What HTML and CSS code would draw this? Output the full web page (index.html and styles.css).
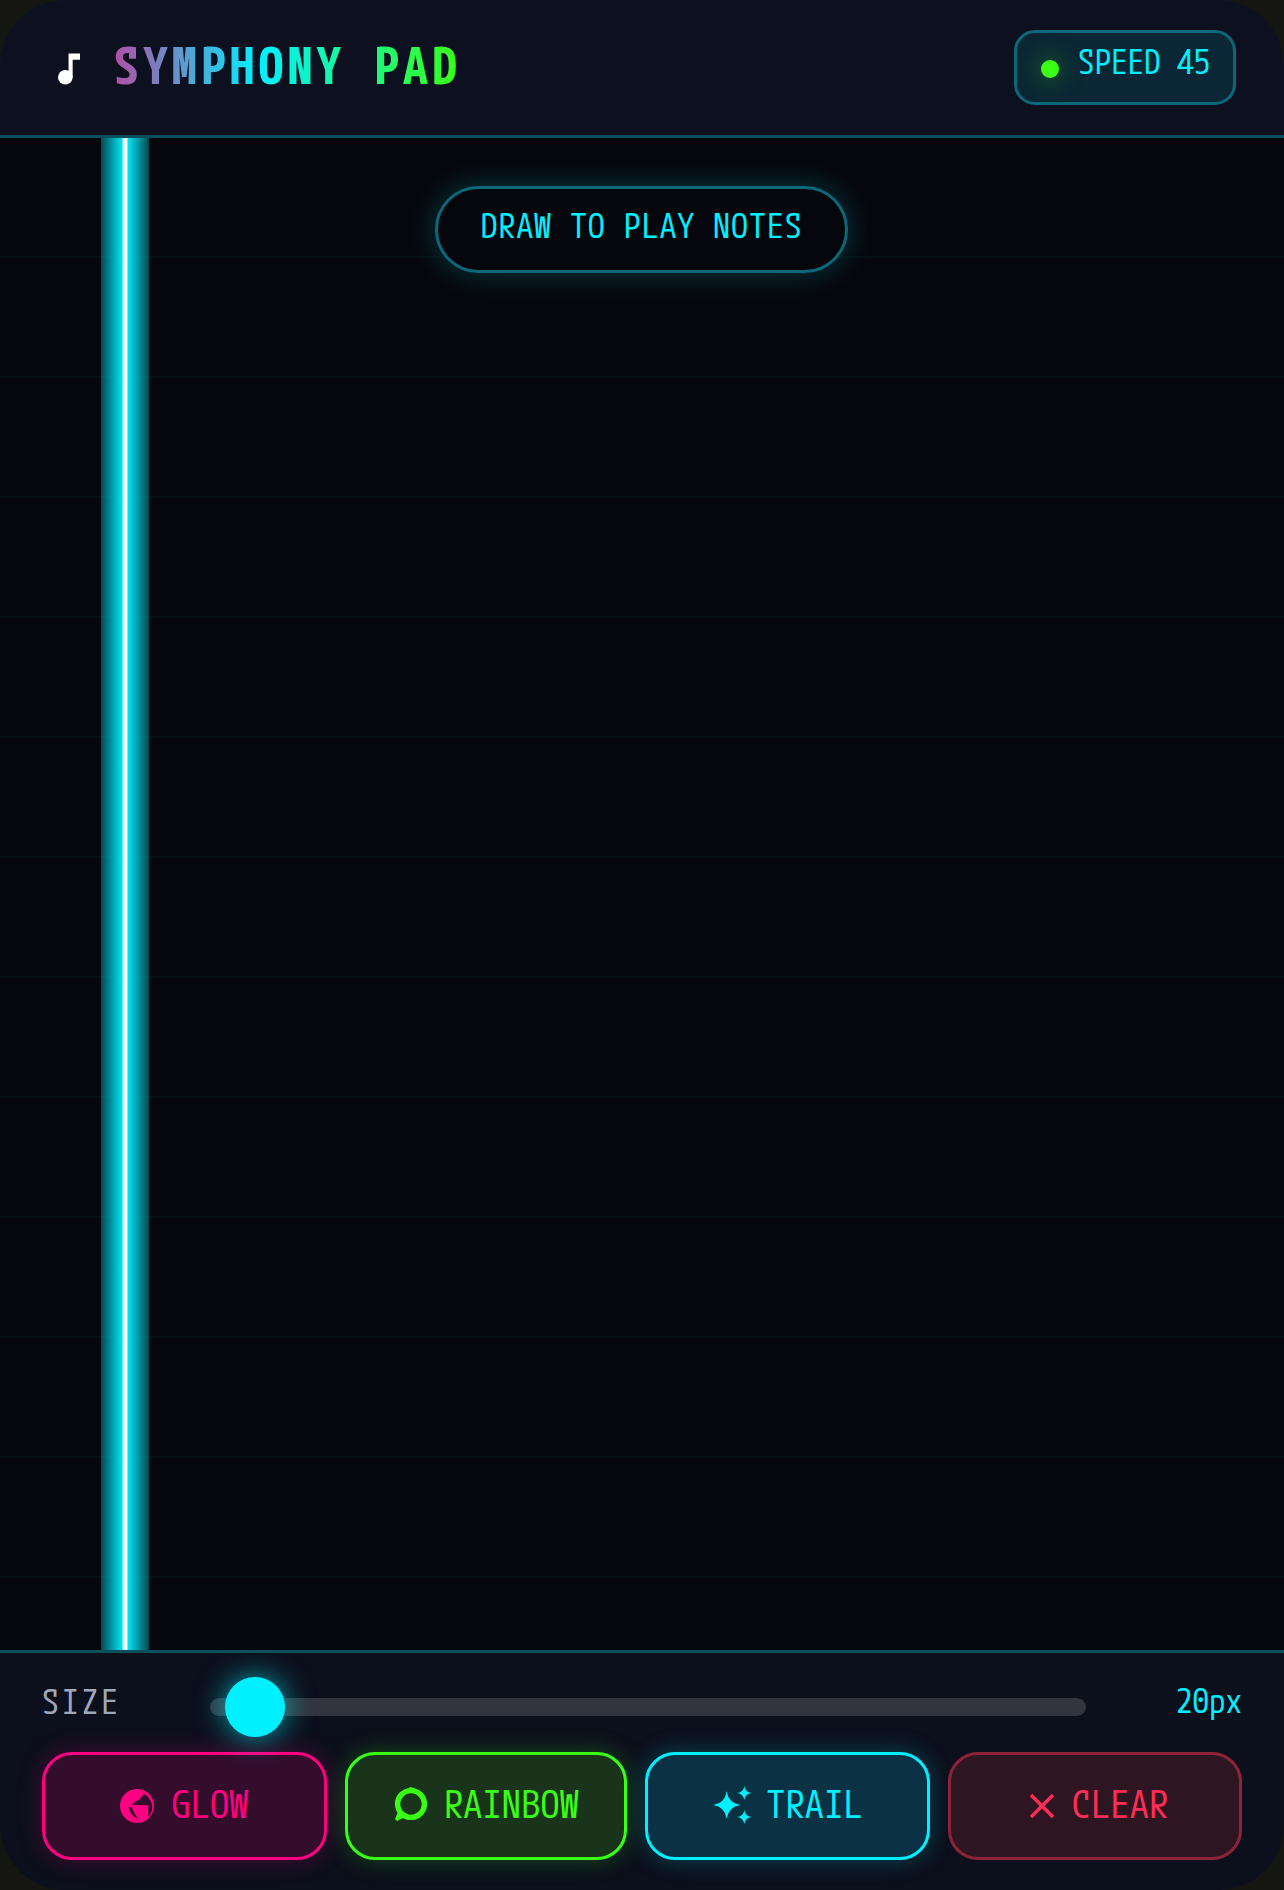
FILE: index.html
```html
<!DOCTYPE html>
<html lang="en">
<head>
<meta charset="utf-8">
<title>Symphony Pad</title>
<link rel="stylesheet" href="styles.css">
</head>
<body>
<main class="phone">
  <header class="topbar">
    <div class="brand">
      <svg class="note" viewBox="0 0 24 34" aria-hidden="true"><circle cx="8" cy="26" r="8"/><path d="M11.5 0H24V7H16V26H11.5Z"/></svg>
      <h1 class="title">SYMPHONY PAD</h1>
    </div>
    <div class="speed"><span class="dot"></span><span class="speed-text">SPEED 45</span></div>
  </header>
  <section class="canvas">
    <div class="playhead"></div>
    <div class="hint">DRAW TO PLAY NOTES</div>
  </section>
  <footer class="controls">
    <div class="size-row">
      <span class="size-label">SIZE</span>
      <div class="track"><span class="thumb"></span></div>
      <span class="size-value">20px</span>
    </div>
    <div class="buttons">
      <button class="btn btn-glow">
        <svg class="icon icon-globe" viewBox="25 28 100 100" aria-hidden="true"><circle cx="75" cy="78" r="50" fill="#ff0080"/><path class="cut" d="M95 42C108 48 118 62 120 80C120 92 116 102 108 110L108 76L60 74C66 66 80 62 85 56Z"/><path class="cut" d="M50 82L60 82C64 95 70 105 80 118C65 112 54 98 50 82Z"/></svg>
        <span>GLOW</span>
      </button>
      <button class="btn btn-rainbow">
        <svg class="icon icon-ring" viewBox="0 0 34 38" aria-hidden="true"><circle cx="18" cy="19" r="13.4" fill="none" stroke="#39ff14" stroke-width="5.4"/><path fill="#39ff14" d="M5 27L2 34L4 36L12 32ZM16 2L22 3L19 7Z"/></svg>
        <span>RAINBOW</span>
      </button>
      <button class="btn btn-trail">
        <svg class="icon icon-spark" viewBox="0 0 40 40" aria-hidden="true"><path d="M14.7 5.3Q16.5 17.2 28.2 19Q16.5 20.8 14.7 32.7Q12.9 20.8 1.2 19Q12.9 17.2 14.7 5.3Z"/><path d="M32.3 0Q33.2 6.1 39.3 7Q33.2 7.900 32.3 14Q31.4 7.900 25.300 7Q31.4 6.100 32.3 0Z"/><path d="M32.3 24Q33.2 30.100 39.3 31Q33.2 31.900 32.3 38Q31.4 31.900 25.300 31Q31.4 30.100 32.3 24Z"/></svg>
        <span>TRAIL</span>
      </button>
      <button class="btn btn-clear">
        <svg class="icon icon-x" viewBox="0 0 26 26" aria-hidden="true"><path d="M2 2L24 24M24 2L2 24" fill="none" stroke="#ff2d55" stroke-width="3.400"/></svg>
        <span>CLEAR</span>
      </button>
    </div>
  </footer>
</main>
</body>
</html>
```

FILE: styles.css
```css
* { box-sizing: border-box; }
html, body { margin: 0; height: 100%; }
body {
  background: #151512;
  font-family: "M PLUS 1 Code", "Noto Sans Mono CJK SC", monospace;
  color: #00f0ff;
}
.phone {
  width: 1284px;
  height: 1890px;
  border-radius: 66px;
  box-shadow: inset 0 0 0 3px #222220;
  overflow: hidden;
  display: flex;
  flex-direction: column;
  background: #0d111f;
  position: relative;
}
.topbar {
  height: 138px;
  flex: none;
  display: flex;
  align-items: center;
  justify-content: space-between;
  padding: 0 48px 0 58px;
  background: #0d111f;
  border-bottom: 3px solid #0b4e5c;
}
.brand { display: flex; align-items: center; gap: 34px; }
.note { width: 22px; height: 32px; fill: #fff; margin-top: 3px; display: block; }
.title {
  margin: 0;
  font-size: 50px;
  font-weight: 700;
  letter-spacing: 3.9px;
  line-height: 1.2;
  padding-bottom: 6px;
  white-space: pre;
  background: linear-gradient(90deg, #b04fa5 0%, #00f0ff 42%, #39ff14 100%);
  -webkit-background-clip: text;
  background-clip: text;
  color: transparent;
}
.speed {
  width: 222px;
  height: 75px;
  display: flex;
  align-items: center;
  gap: 19px;
  padding-left: 24px;
  border: 3px solid #0a6878;
  border-radius: 21px;
  background: #0b2634;
}
.dot {
  width: 18px;
  height: 18px;
  margin-top: 2px;
  border-radius: 50%;
  background: #39ff14;
  box-shadow: 0 0 24px rgba(57, 255, 20, 0.5);
}
.speed-text { font-size: 33px; line-height: 1; padding-bottom: 13px; white-space: pre; }
.canvas {
  flex: 1;
  position: relative;
  background-color: #06070d;
  background-image: linear-gradient(180deg, transparent 118px, rgba(0, 240, 200, 0.035) 118px, rgba(0, 240, 200, 0.035) 120px);
  background-size: 100% 120px;
  overflow: hidden;
}
.playhead {
  position: absolute;
  left: 101px;
  top: 0;
  bottom: 0;
  width: 48px;
  background: linear-gradient(90deg, rgba(0, 240, 255, 0.28) 0%, #00e5f5 44%, #fff 46%, #fff 54%, #00e5f5 56%, rgba(0, 240, 255, 0.28) 100%);
}
.hint {
  position: absolute;
  left: 435px;
  top: 48px;
  width: 413px;
  height: 87px;
  border: 3px solid #0a6878;
  border-radius: 44px;
  background: #06070d;
  box-shadow: 0 0 30px rgba(0, 240, 255, 0.22);
  display: flex;
  align-items: center;
  justify-content: center;
  font-size: 34px;
  letter-spacing: 0.9px;
  line-height: 1;
  padding-bottom: 10px;
  white-space: pre;
}
.controls {
  height: 240px;
  flex: none;
  padding: 24px 42px 30px;
  background: #0c0f1c;
  border-top: 3px solid #0b4e5c;
  margin-top: -3px;
  position: relative;
}
.size-row { display: flex; align-items: center; height: 60px; }
.size-label {
  width: 168px;
  font-size: 34px;
  letter-spacing: 2.7px;
  color: #a0a8b8;
  line-height: 1;
  padding-bottom: 13px;
}
.track {
  width: 876px;
  height: 18px;
  border-radius: 9px;
  background: #32353f;
  position: relative;
}
.thumb {
  position: absolute;
  left: 15px;
  top: -21px;
  width: 60px;
  height: 60px;
  border-radius: 50%;
  background: #00f0ff;
  box-shadow: 0 0 30px rgba(0, 240, 255, 0.7);
}
.size-value {
  margin-left: auto;
  font-size: 33px;
  line-height: 1;
  padding-bottom: 13px;
}
.buttons {
  display: grid;
  grid-template-columns: 285fr 282fr 285fr 294fr;
  gap: 18px;
  margin-top: 15px;
}
.btn {
  height: 108px;
  border: 3px solid;
  border-radius: 30px;
  display: flex;
  align-items: center;
  justify-content: center;
  gap: 17px;
  font-family: inherit;
  font-size: 38px;
  letter-spacing: 0.3px;
  padding: 0;
  cursor: pointer;
}
.btn span { line-height: 1; padding-bottom: 5px; }
.icon { display: block; flex: none; }
.btn-glow { color: #ff0080; border-color: #ff0080; background: #340d2c; box-shadow: 0 0 24px rgba(255, 0, 128, 0.25); }
.btn-rainbow { color: #39ff14; border-color: #39ff14; background: #1a331b; box-shadow: 0 0 24px rgba(57, 255, 20, 0.25); }
.btn-trail { color: #00f0ff; border-color: #00f0ff; background: #0b3244; box-shadow: 0 0 24px rgba(0, 240, 255, 0.25); gap: 14px; }
.btn-clear { color: #ff2d55; border-color: #8e2338; background: #2e1522; padding-left: 7px; }
.icon-globe { width: 34px; height: 34px; margin-top: -1px; }
.cut { fill: #340d2c; }
.icon-ring { width: 34px; height: 38px; margin-top: -4px; }
.icon-spark { width: 40px; height: 40px; fill: #00f0ff; }
.icon-x { width: 26px; height: 26px; }
```
